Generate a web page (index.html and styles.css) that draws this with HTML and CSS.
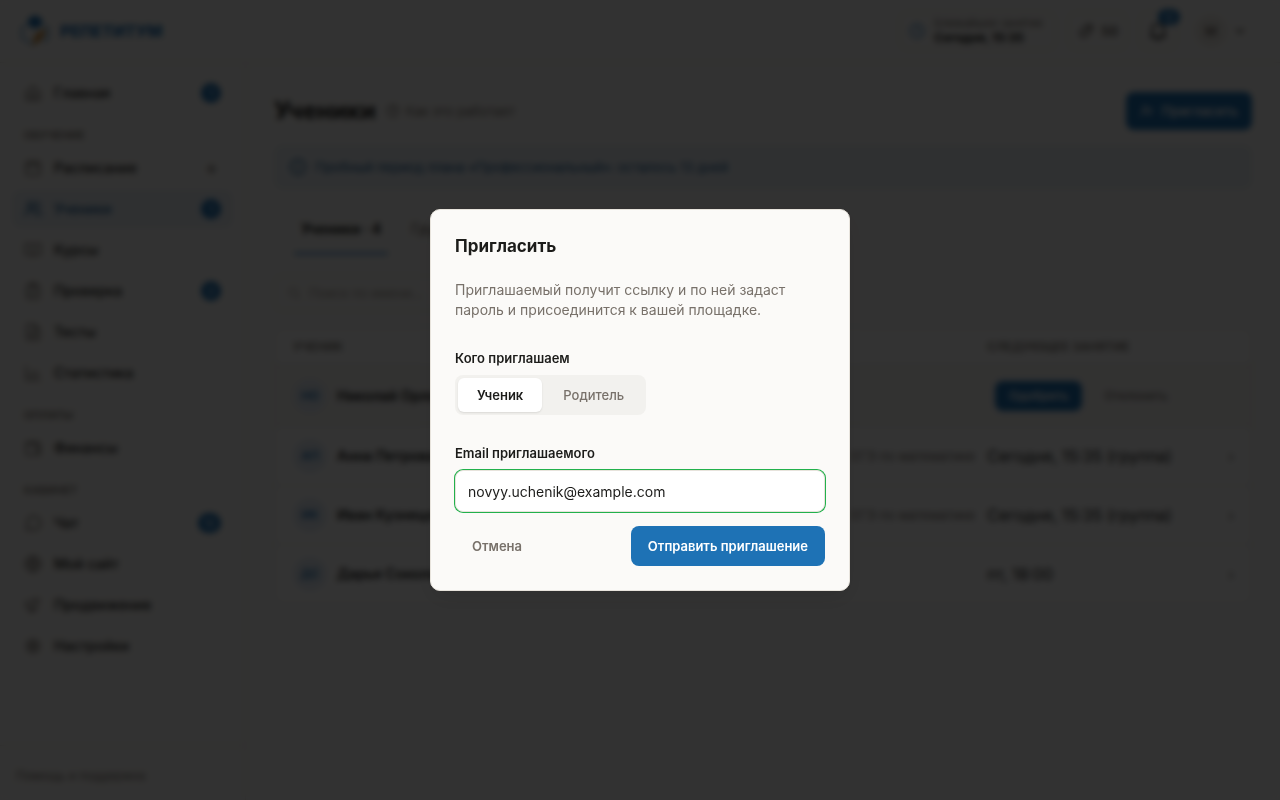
FILE: index.html
```html
<!DOCTYPE html>
<html lang="ru">
<head>
  <meta charset="UTF-8">
  <meta name="viewport" content="width=device-width, initial-scale=1">
  <title>Ученики — Репетитум</title>
  <link rel="stylesheet" href="styles.css">
</head>
<body>
  <div class="app">
    <header class="topbar">
      <a class="brand" href="#">
        <svg width="30" height="32" viewBox="0 0 30 32" fill="none">
          <path d="M6 10 2 13v10l12 7" stroke="#5f9fd2" stroke-width="2"/>
          <path d="M24 10l4 3v10l-5 4" stroke="#5f9fd2" stroke-width="2"/>
          <path d="M15 0 8 4v6l7 4 7-4V4z" fill="#1e72b5"/>
          <path d="M25 13 15 20l-3 11 8-5 5-7z" fill="#c98a3c"/>
        </svg>
        <span>РЕПЕТИТУМ</span>
      </a>
      <div class="topbar-right">
        <a class="next-lesson" href="#">
          <svg class="icon" viewBox="0 0 24 24"><circle cx="12" cy="12" r="9"/><path d="M12 7v5l3 2"/></svg>
          <span class="next-text"><small>Ближайшее занятие</small><b>Сегодня, 15:35</b></span>
        </a>
        <a class="pill" href="#">
          <svg class="icon" viewBox="0 0 24 24"><path d="M10 14 20 4M8 9l4-4a5 5 0 0 1 7 7l-4 4M16 15l-4 4a5 5 0 0 1-7-7l4-4"/></svg>
          <span>50</span>
        </a>
        <button class="bell" type="button" aria-label="Уведомления">
          <svg class="icon icon-large" viewBox="0 0 24 24"><path d="M5 18V10a7 7 0 0 1 14 0v8l2 1H3zM10 22h4"/></svg>
          <span class="bell-count">12</span>
        </button>
        <button class="user" type="button">
          <span class="user-avatar">М</span>
          <svg class="icon icon-small" viewBox="0 0 24 24"><path d="m6 9 6 6 6-6"/></svg>
        </button>
      </div>
    </header>

    <aside class="sidebar">
      <nav class="nav">
        <a href="#"><svg class="icon" viewBox="0 0 24 24"><path d="m3 11 9-8 9 8v10H3zM9 21v-8h6v8"/></svg><span>Главная</span><span class="count">1</span></a>
        <h2>Обучение</h2>
        <a href="#"><svg class="icon" viewBox="0 0 24 24"><rect x="3" y="4" width="18" height="17" rx="2"/><path d="M3 9h18M8 2v4M16 2v4"/></svg><span>Расписание</span><span class="plus">+</span></a>
        <a class="active" href="#"><svg class="icon" viewBox="0 0 24 24"><circle cx="9" cy="7" r="4"/><path d="M2 21v-2a5 5 0 0 1 5-5h4a5 5 0 0 1 5 5v2M16 3a4 4 0 0 1 0 8M22 21v-2a4 4 0 0 0-3-4"/></svg><span>Ученики</span><span class="count">1</span></a>
        <a href="#"><svg class="icon" viewBox="0 0 24 24"><path d="M2 4h7l3 2 3-2h7v14h-7l-3 2-3-2H2zM12 6v14"/></svg><span>Курсы</span></a>
        <a href="#"><svg class="icon" viewBox="0 0 24 24"><rect x="4" y="4" width="16" height="18" rx="2"/><path d="M9 2h6v4H9zM8 14l3 3 5-6"/></svg><span>Проверка</span><span class="count">2</span></a>
        <a href="#"><svg class="icon" viewBox="0 0 24 24"><path d="M14 2H4v20h16V8zM14 2v6h6M8 13h8M8 17h8"/></svg><span>Тесты</span></a>
        <a href="#"><svg class="icon" viewBox="0 0 24 24"><path d="M3 3v18h18M8 17v-4M13 17V9M18 17v-6"/></svg><span>Статистика</span></a>
        <h2>Оплаты</h2>
        <a href="#"><svg class="icon" viewBox="0 0 24 24"><path d="M19 7V4H5a2 2 0 0 0-2 2v13a2 2 0 0 0 2 2h16V7H5M21 12h-5v4h5"/></svg><span>Финансы</span></a>
        <h2>Кабинет</h2>
        <a href="#"><svg class="icon" viewBox="0 0 24 24"><path d="M3 21l2-5a9 9 0 1 1 4 4z"/></svg><span>Чат</span><span class="count">12</span></a>
        <a href="#"><svg class="icon" viewBox="0 0 24 24"><circle cx="12" cy="12" r="10"/><path d="M2 12h20M12 2c-5 6-5 14 0 20 5-6 5-14 0-20"/></svg><span>Мой сайт</span></a>
        <a href="#"><svg class="icon" viewBox="0 0 24 24"><path d="M3 8v7h5l8 4V4L8 8zM8 15v6h3v-5M20 4v4"/></svg><span>Продвижение</span></a>
        <a href="#"><svg class="icon" viewBox="0 0 24 24"><circle cx="12" cy="12" r="3"/><circle cx="12" cy="12" r="7"/><path d="M12 2v3M12 19v3M2 12h3M19 12h3M5 5l2 2M17 17l2 2M19 5l-2 2M7 17l-2 2"/></svg><span>Настройки</span></a>
      </nav>
      <a class="help" href="#">Помощь и поддержка</a>
    </aside>

    <main class="content">
      <div class="page-head">
        <h1>Ученики</h1>
        <a class="how" href="#"><svg class="icon icon-small" viewBox="0 0 24 24"><circle cx="12" cy="12" r="10"/><path d="M9 9a3 3 0 1 1 3 4v1M12 17v1"/></svg>Как это работает</a>
        <button class="btn btn-primary invite" type="button">
          <svg class="icon icon-small" viewBox="0 0 24 24"><circle cx="9" cy="7" r="4"/><path d="M2 21v-2a5 5 0 0 1 5-5h4a5 5 0 0 1 5 5v2M19 8v6M16 11h6"/></svg>
          Пригласить
        </button>
      </div>

      <div class="notice">
        <svg class="icon" viewBox="0 0 24 24"><circle cx="12" cy="12" r="10"/><path d="M12 11v6M12 7v1"/></svg>
        <span>Пробный период плана «Профессиональный»: осталось 13 дней</span>
      </div>

      <div class="tabs">
        <a class="active" href="#">Ученики · 4</a>
        <a href="#">Группы · 1</a>
      </div>

      <div class="search">
        <svg class="icon icon-small" viewBox="0 0 24 24"><circle cx="11" cy="11" r="7"/><path d="m16 16 5 5"/></svg>
        <input type="search" placeholder="Поиск по имени…" aria-label="Поиск по имени">
      </div>

      <table class="students">
        <thead>
          <tr><th class="col-name">Ученик</th><th>Курс</th><th class="col-next">Следующее занятие</th><th class="col-go"></th></tr>
        </thead>
        <tbody>
          <tr class="request">
            <td><div class="person"><span class="avatar">НО</span>Николай Орлов</div></td>
            <td></td>
            <td colspan="2"><div class="actions"><button class="btn btn-primary btn-small" type="button">Одобрить</button><button class="btn btn-plain btn-small" type="button">Отклонить</button></div></td>
          </tr>
          <tr>
            <td><div class="person"><span class="avatar">АП</span>Анна Петрова</div></td>
            <td class="course">ЕГЭ по математике</td>
            <td>Сегодня, 15:35 (группа)</td>
            <td class="go">›</td>
          </tr>
          <tr>
            <td><div class="person"><span class="avatar">ИК</span>Иван Кузнецов</div></td>
            <td class="course">ЕГЭ по математике</td>
            <td>Сегодня, 15:35 (группа)</td>
            <td class="go">›</td>
          </tr>
          <tr>
            <td><div class="person"><span class="avatar">ДС</span>Дарья Соколова</div></td>
            <td></td>
            <td>пт, 18:00</td>
            <td class="go">›</td>
          </tr>
        </tbody>
      </table>
    </main>
  </div>

  <div class="overlay">
    <form class="modal" role="dialog" aria-modal="true" aria-labelledby="modalTitle">
      <h2 id="modalTitle">Пригласить</h2>
      <p>Приглашаемый получит ссылку и по ней задаст пароль и присоединится к вашей площадке.</p>

      <fieldset class="field">
        <legend>Кого приглашаем</legend>
        <div class="segmented">
          <label><input type="radio" name="role" value="student" checked><span>Ученик</span></label>
          <label><input type="radio" name="role" value="parent"><span>Родитель</span></label>
        </div>
      </fieldset>

      <div class="field">
        <label class="field-label" for="email">Email приглашаемого</label>
        <input class="text-input" type="email" id="email" value="novyy.uchenik@example.com">
      </div>

      <div class="modal-actions">
        <button class="btn btn-ghost" type="button">Отмена</button>
        <button class="btn btn-primary" type="submit">Отправить приглашение</button>
      </div>
    </form>
  </div>
</body>
</html>
```

FILE: styles.css
```css
:root {
  --blue: #1e72b5;
  --text: #1c1c1a;
  --muted: #78716a;
  --line: #e7e3dc;
  --bg: #fbfaf8;
}

* { box-sizing: border-box; }

body {
  margin: 0;
  font-family: Inter, "Noto Sans", sans-serif;
  font-size: 13px;
  line-height: 20px;
  color: var(--text);
  background: var(--bg);
}

a { color: inherit; text-decoration: none; }
button, input { font: inherit; color: inherit; }
h1, h2, p { margin: 0; }

.icon {
  width: 18px;
  height: 18px;
  flex: none;
  fill: none;
  stroke: currentColor;
  stroke-width: 2;
  stroke-linecap: round;
  stroke-linejoin: round;
}
.icon-small { width: 14px; height: 14px; }
.icon-large { width: 20px; height: 20px; }

.app {
  display: grid;
  grid-template: auto 1fr / 246px 1fr;
  min-height: 100vh;
}

/* top bar */
.topbar {
  grid-column: 1 / -1;
  display: flex;
  align-items: center;
  justify-content: space-between;
  height: 63px;
  padding: 0 27px 0 20px;
  border-bottom: 1px solid var(--line);
}
.brand {
  display: flex;
  align-items: center;
  gap: 10px;
  color: var(--blue);
  font-size: 16px;
  font-weight: 800;
}
.topbar-right { display: flex; align-items: center; gap: 12px; }
.next-lesson {
  display: flex;
  align-items: center;
  gap: 8px;
  height: 38px;
  padding: 0 12px 0 8px;
  border: 1px solid var(--line);
  border-radius: 8px;
}
.next-lesson .icon { color: #4a90cc; }
.next-text { display: flex; flex-direction: column; }
.next-text small { font-size: 11px; line-height: 14px; color: var(--muted); }
.next-text b { font-size: 12px; line-height: 16px; }
.pill {
  display: flex;
  align-items: center;
  gap: 6px;
  height: 38px;
  padding: 0 8px;
  border: 1px solid var(--line);
  border-radius: 8px;
  color: #57524c;
  font-weight: 600;
}
.bell {
  position: relative;
  display: grid;
  place-items: center;
  width: 38px;
  height: 38px;
  padding: 0;
  border: 1px solid var(--line);
  border-radius: 8px;
  background: none;
}
.bell-count {
  position: absolute;
  top: -4px;
  right: -4px;
  padding: 0 6px;
  border-radius: 8px;
  background: var(--blue);
  color: #fff;
  font-size: 10px;
  line-height: 16px;
}
.user {
  display: flex;
  align-items: center;
  gap: 6px;
  padding: 0 6px;
  border: 0;
  background: none;
}
.user-avatar {
  width: 32px;
  border-radius: 50%;
  background: #eeebe5;
  color: var(--muted);
  font-weight: 600;
  line-height: 32px;
}

/* sidebar */
.sidebar {
  display: flex;
  flex-direction: column;
  justify-content: space-between;
  border-right: 1px solid var(--line);
}
.nav {
  display: flex;
  flex-direction: column;
  gap: 3px;
  padding: 11px 12px;
}
.nav a {
  display: flex;
  align-items: center;
  gap: 12px;
  height: 38px;
  padding: 0 12px;
  border-radius: 8px;
  font-size: 14px;
  font-weight: 500;
}
.nav .icon { color: var(--muted); }
.nav a.active, .nav a.active .icon { color: #1b5e94; }
.nav a.active { background: #e9eff5; }
.nav h2 {
  padding: 13px 12px 4px;
  color: var(--muted);
  font-size: 11px;
  font-weight: 600;
  line-height: 14px;
  text-transform: uppercase;
}
.count {
  min-width: 20px;
  margin-left: auto;
  padding: 0 6px;
  border-radius: 10px;
  background: var(--blue);
  color: #fff;
  font-size: 11px;
  text-align: center;
}
.plus { margin-left: auto; padding: 0 3px; color: var(--muted); font-size: 20px; }
.help {
  padding: 20px 16px 14px;
  border-top: 1px solid var(--line);
  color: var(--muted);
  font-size: 12px;
}

/* page */
.content { padding: 29px 28px; }
.page-head { display: flex; align-items: center; gap: 10px; }
.page-head h1 { font-size: 24px; line-height: 32px; }
.how { display: flex; align-items: center; gap: 6px; color: var(--muted); }
.invite { margin-left: auto; }
.notice {
  display: flex;
  align-items: center;
  gap: 8px;
  height: 44px;
  margin-top: 15px;
  padding: 0 14px;
  border: 1px solid #dbe6ee;
  border-radius: 8px;
  background: #ebf1f6;
  color: #1b5e94;
}
.tabs {
  display: flex;
  gap: 16px;
  margin: 15px 20px 0;
}
.tabs a {
  padding: 15px 7px 13px;
  border-bottom: 3px solid transparent;
  color: var(--muted);
  font-size: 14px;
  font-weight: 500;
}
.tabs a.active { border-color: #6aa5d8; color: var(--text); font-weight: 700; }
.search {
  display: flex;
  align-items: center;
  gap: 8px;
  width: 280px;
  height: 36px;
  margin: 20px 0 17px;
  padding: 0 12px;
  border: 1px solid var(--line);
  border-radius: 8px;
  color: #a8a29a;
}
.search input { width: 100%; padding: 0; border: 0; background: none; }
.search input::placeholder { color: #a8a29a; }

.students {
  width: 100%;
  table-layout: fixed;
  border: 1px solid var(--line);
  border-radius: 8px;
  border-spacing: 0;
  background: #fff;
  font-size: 16px;
}
.students th {
  height: 35px;
  padding: 0 6px;
  color: var(--muted);
  font-size: 12px;
  font-weight: 600;
  text-align: left;
  text-transform: uppercase;
}
.students td {
  height: 59px;
  padding: 0 6px;
  border-top: 1px solid var(--line);
}
.students th:first-child, .students td:first-child { padding-left: 18px; }
.students .col-name { width: 380px; }
.students .col-next { width: 230px; }
.students .col-go { width: 40px; }
.students .request td { height: 62px; background: #f9f8f6; }
.students .course { color: var(--muted); font-size: 13px; text-align: right; }
.students .go { color: var(--muted); text-align: center; }
.person {
  display: flex;
  align-items: center;
  gap: 10px;
  font-size: 14px;
  font-weight: 600;
}
.avatar {
  width: 34px;
  border-radius: 50%;
  background: #e6eef7;
  color: var(--blue);
  font-size: 12px;
  line-height: 34px;
  text-align: center;
}
.actions { display: flex; gap: 8px; padding-left: 8px; }

.btn {
  display: flex;
  align-items: center;
  gap: 8px;
  height: 38px;
  padding: 0 14px;
  border: 0;
  border-radius: 8px;
  background: none;
  font-size: 13px;
  font-weight: 600;
}
.btn-primary { background: var(--blue); color: #fff; }
.btn-small { height: 30px; padding: 0 14px; font-size: 12px; }
.btn-plain { color: var(--muted); font-weight: 500; }
.btn-ghost { color: var(--muted); }

/* invite dialog */
.overlay {
  position: fixed;
  inset: 0;
  display: grid;
  place-items: center;
  padding: 16px;
  background: rgba(0, 0, 0, .8);
  backdrop-filter: blur(3px);
}
.modal {
  width: 100%;
  max-width: 420px;
  padding: 24px;
  border: 1px solid var(--line);
  border-radius: 10px;
  background: var(--bg);
  box-shadow: 0 8px 24px rgba(0, 0, 0, .1);
}
.modal h2 { font-size: 17px; line-height: 24px; }
.modal p { margin: 22px 0 28px; color: var(--muted); font-size: 14px; }
.field { margin: 0; padding: 0; border: 0; }
.field legend, .field-label {
  display: block;
  padding: 0;
  font-size: 13px;
  font-weight: 600;
  line-height: 20px;
}
.segmented {
  display: inline-flex;
  gap: 2px;
  margin: 7px 0 28px;
  padding: 3px;
  border-radius: 8px;
  background: #f2f1ee;
  vertical-align: top;
}
.segmented input {
  position: absolute;
  opacity: 0;
}
.segmented span {
  display: block;
  padding: 7px 19px;
  border-radius: 6px;
  color: var(--muted);
  font-weight: 500;
}
.segmented input:checked + span {
  background: #fff;
  box-shadow: 0 1px 2px rgba(0, 0, 0, .1);
  color: var(--text);
  font-weight: 600;
}
.text-input {
  display: block;
  width: 100%;
  height: 42px;
  margin-top: 7px;
  padding: 0 12px;
  border: 1px solid var(--line);
  border-radius: 8px;
  outline: 0;
  background: #fff;
  box-shadow: 0 0 0 1px #22b14c;
  font-size: 14px;
}
.modal-actions {
  display: flex;
  justify-content: space-between;
  margin-top: 14px;
}
.modal-actions .btn { height: 40px; padding: 0 17px; }
```
